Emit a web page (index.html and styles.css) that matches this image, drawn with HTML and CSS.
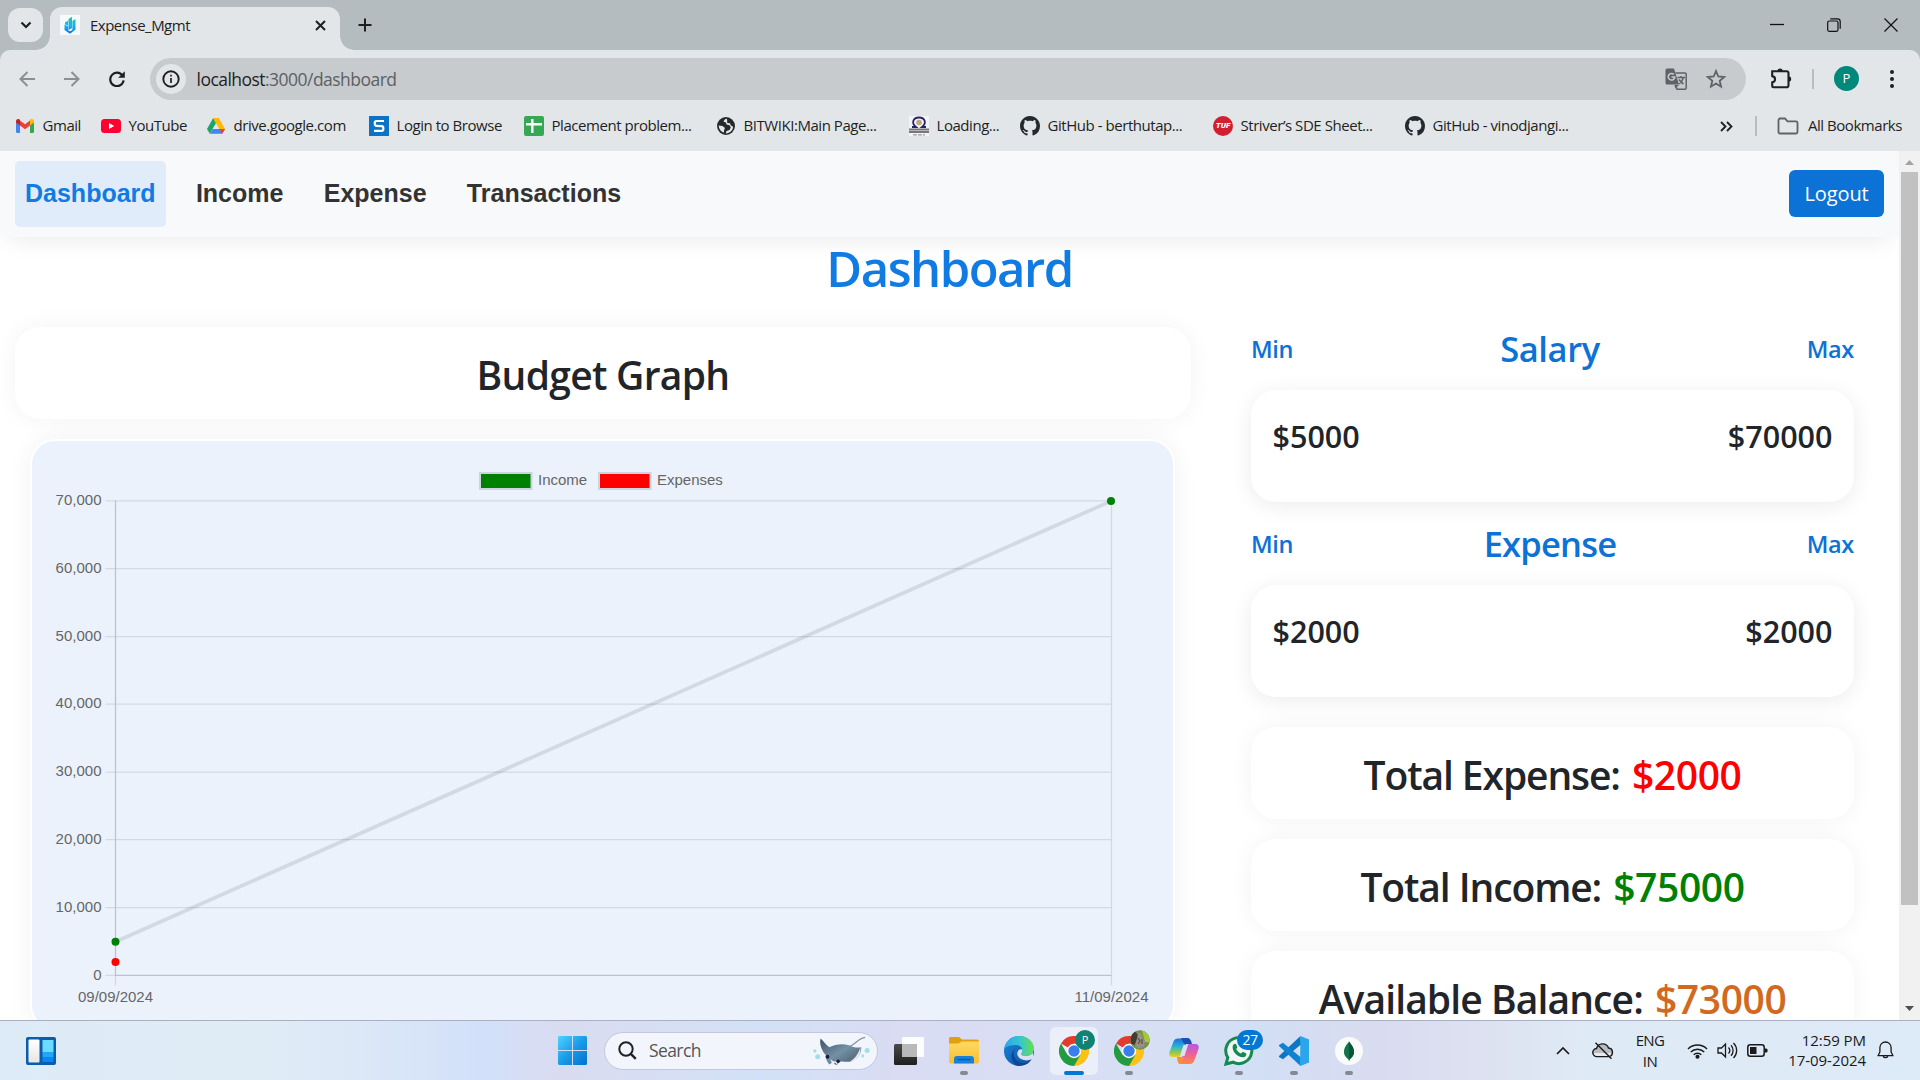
FILE: index.html
```html
<!DOCTYPE html>
<html lang="en">
<head>
<meta charset="utf-8">
<title>Expense_Mgmt</title>
<link rel="stylesheet" href="styles.css">
</head>
<body>
<svg width="0" height="0" class="defs">
  <defs>
    <linearGradient id="gStart" x1="0" y1="0" x2="1" y2="1"><stop offset="0" stop-color="#4fd3ff"/><stop offset=".5" stop-color="#1a9be8"/><stop offset="1" stop-color="#0072d0"/></linearGradient>
    <linearGradient id="gFav" x1="0" y1="0" x2="0" y2="1"><stop offset="0" stop-color="#12c8a8"/><stop offset=".5" stop-color="#1fb4ea"/><stop offset="1" stop-color="#0f6fe0"/></linearGradient>
    <linearGradient id="gWhite" x1="0" y1="0" x2="0" y2="1"><stop offset="0" stop-color="#fff"/><stop offset="1" stop-color="#e6e6e6"/></linearGradient>
    <linearGradient id="gFolder" x1="0" y1="0" x2="0" y2="1"><stop offset="0" stop-color="#ffda62"/><stop offset="1" stop-color="#f9bd2f"/></linearGradient>
    <linearGradient id="gEdgeTop" x1="0" y1="0" x2="1" y2="0"><stop offset="0" stop-color="#2aa8e6"/><stop offset=".5" stop-color="#34c4d4"/><stop offset="1" stop-color="#66e04f"/></linearGradient>
    <linearGradient id="gEdge" x1="0" y1="0" x2="1" y2="1"><stop offset="0" stop-color="#1b86d8"/><stop offset="1" stop-color="#0c4ea3"/></linearGradient>
    <linearGradient id="gCopA" x1="0" y1="0" x2="0" y2="1"><stop offset="0" stop-color="#1f6fe0"/><stop offset=".45" stop-color="#2bb5d6"/><stop offset=".75" stop-color="#8ccb4a"/><stop offset="1" stop-color="#f5c928"/></linearGradient>
    <linearGradient id="gCopB" x1="0" y1="0" x2="0" y2="1"><stop offset="0" stop-color="#b05be8"/><stop offset=".5" stop-color="#ee5f9a"/><stop offset="1" stop-color="#fb8b45"/></linearGradient>
    <linearGradient id="gRay" x1="0" y1="0" x2="1" y2="1"><stop offset="0" stop-color="#3f5264"/><stop offset=".5" stop-color="#7391a6"/><stop offset="1" stop-color="#46525f"/></linearGradient>
    <linearGradient id="gTaskDark" x1="0" y1="0" x2="0" y2="1"><stop offset="0" stop-color="#4a4a4a"/><stop offset="1" stop-color="#1f1f1f"/></linearGradient>
    <symbol id="github" viewBox="0 0 16 16"><path fill="#24292f" d="M8 0C3.58 0 0 3.58 0 8c0 3.54 2.29 6.53 5.47 7.59.4.07.55-.17.55-.38 0-.19-.01-.82-.01-1.49-2.01.37-2.53-.49-2.69-.94-.09-.23-.48-.94-.82-1.13-.28-.15-.68-.52-.01-.53.63-.01 1.08.58 1.23.82.72 1.21 1.87.87 2.33.66.07-.52.28-.87.51-1.07-1.78-.2-3.64-.89-3.64-3.95 0-.87.31-1.59.82-2.15-.08-.2-.36-1.02.08-2.12 0 0 .67-.21 2.2.82.64-.18 1.32-.27 2-.27s1.36.09 2 .27c1.53-1.04 2.2-.82 2.2-.82.44 1.1.16 1.92.08 2.12.51.56.82 1.27.82 2.15 0 3.07-1.87 3.75-3.65 3.95.29.25.54.73.54 1.48 0 1.07-.01 1.93-.01 2.2 0 .21.15.46.55.38A8.01 8.01 0 0 0 16 8c0-4.42-3.58-8-8-8z"/></symbol>
    <symbol id="chrome" viewBox="0 0 30 30">
      <path fill="#e33b2e" d="M15 15 2 7.5A15 15 0 0 1 28 7.500z"/>
      <path fill="#fbc116" d="M15 15V7.5h13A15 15 0 0 1 15 30z"/>
      <path fill="#249a41" d="M2 7.500 8.500 18.750 15 15 21.500 18.750 15 30A15 15 0 0 1 2 7.500z"/>
      <circle cx="15" cy="15" r="7.200" fill="#fff"/><circle cx="15" cy="15" r="5.700" fill="#3b7ded"/>
    </symbol>
  </defs>
</svg>

<div class="screen">
  <header class="tabstrip">
    <button class="tab-search"><svg width="12" height="8" viewBox="0 0 12 8"><path d="M1.500 1.500 6 6l4.500-4.500" fill="none" stroke="#1f1f1f" stroke-width="2.200"/></svg></button>
    <div class="tab">
      <svg class="favicon" width="20" height="20" viewBox="0 0 20 20"><rect width="20" height="20" fill="#f7fafc"/><path fill="url(#gFav)" d="M8.500 4 12 1.800V13l-3.500 2zM12.400 6 15.500 4v10.500L10 18.800 4.500 15V9.500l3.600 2v3.700l1.900 1 2.400-1.300zM5 7.500 8 5.800v5L5 9.300z"/></svg>
      <span class="tab-title">Expense_Mgmt</span>
      <svg class="tab-close" width="11" height="11" viewBox="0 0 11 11"><path d="m1 1 9 9M10 1l-9 9" stroke="#1f1f1f" stroke-width="2"/></svg>
    </div>
    <svg class="tab-new" width="14" height="14" viewBox="0 0 14 14"><path d="M7 .5v13M.5 7h13" stroke="#1f1f1f" stroke-width="2"/></svg>
    <div class="window-controls">
      <svg width="14" height="14" viewBox="0 0 14 14"><path d="M0 6.500h14" stroke="#111" stroke-width="1.300"/></svg>
      <svg width="14" height="14" viewBox="0 0 14 14" fill="none" stroke="#111" stroke-width="1.200"><rect x=".7" y="3" width="10.300" height="10.300" rx="1.500"/><path d="M3.300.8h7.200a2.700 2.700 0 0 1 2.700 2.700v7.200"/></svg>
      <svg width="14" height="14" viewBox="0 0 14 14"><path d="m.5.5 13 13m0-13-13 13" stroke="#111" stroke-width="1.200"/></svg>
    </div>
  </header>

  <div class="toolbar">
    <svg class="nav-icon" width="16" height="16" viewBox="0 0 16 16" fill="none" stroke="#8b8f92" stroke-width="2"><path d="M16 8H2M8.500 1 1.500 8l7 7"/></svg>
    <svg class="nav-icon" width="16" height="16" viewBox="0 0 16 16" fill="none" stroke="#8b8f92" stroke-width="2"><path d="M0 8h14M7.500 1l7 7-7 7"/></svg>
    <svg class="nav-icon" width="16" height="16" viewBox="0 0 16 16"><path d="M13.500 4.600A6.700 6.700 0 1 0 14.600 9.400" fill="none" stroke="#1f1f1f" stroke-width="2.200"/><path d="M15.800.2v6.600H9.200z" fill="#1f1f1f"/></svg>
    <div class="omnibox">
      <span class="site-info"><svg width="18" height="18" viewBox="0 0 18 18"><circle cx="9" cy="9" r="7.700" fill="none" stroke="#1f1f1f" stroke-width="1.900"/><path d="M9 8v5M9 4.800v1.800" stroke="#1f1f1f" stroke-width="1.700"/></svg></span>
      <span class="url"><b>localhost</b>:3000/dashboard</span>
      <svg width="22" height="22" viewBox="0 0 22 22"><path fill="#5f6367" d="M2 .5h7l5 16H2A1.500 1.500 0 0 1 .5 15V2A1.500 1.500 0 0 1 2 .5z"/><path fill="none" stroke="#5f6367" stroke-width="1.500" d="M10.500 5H20a1.200 1.200 0 0 1 1.200 1.200V20A1.200 1.200 0 0 1 20 21.200h-8L10 17M12.500 9.500h7.500M16 8v1.500M18.500 9.500c-.8 3-2.500 5-4.500 6.500M14 11.500c1.300 2 2.500 3.300 4.500 4.500"/><path fill="none" stroke="#c7cbce" stroke-width="1.500" d="M8.900 6.500a3.300 3.300 0 1 0 .9 2.600H6.500"/><path fill="#5f6367" d="M10 17h4l-3.500 3.500z"/></svg>
      <svg class="star" width="20" height="20" viewBox="0 0 20 20"><path d="m10 2 2.300 5.500 6 .5-4.600 3.900 1.400 5.800L10 14.600l-5.100 3.100 1.400-5.800L1.700 8l6-.5z" fill="none" stroke="#5f6367" stroke-width="1.800"/></svg>
    </div>
    <svg class="ext" width="23" height="22" viewBox="0 0 23 22"><path d="M3 4.200h4.500M2.200 4.200h14.500a1.800 1.800 0 0 1 1.800 1.800V18.500a1.800 1.800 0 0 1-1.800 1.800H3.500a1.300 1.300 0 0 1-1.300-1.300V15.300c3.800-.6 3.800-5.600 0-6.200z" fill="none" stroke="#1f1f1f" stroke-width="2.100"/><path d="M7.500 4a2.600 2.600 0 0 1 5.200 0zM18.500 9.300a2.600 2.600 0 0 1 0 5.400z" fill="#1f1f1f"/></svg>
    <i class="divider"></i>
    <span class="avatar">P</span>
    <svg class="kebab" width="6" height="20" viewBox="0 0 6 20" fill="#1f1f1f"><circle cx="3" cy="3" r="2"/><circle cx="3" cy="10" r="2"/><circle cx="3" cy="17" r="2"/></svg>
  </div>

  <div class="bookmarks">
    <div class="bookmark-list">
      <span class="bm"><svg width="20" height="20" viewBox="0 0 20 20"><path fill="#4285f4" d="M1 5v10.500A1.500 1.500 0 0 0 2.500 17H5V8z"/><path fill="#34a853" d="M19 5v10.500a1.500 1.500 0 0 1-1.500 1.500H15V8z"/><path fill="#ea4335" d="M5 4.500 10 8.300l5-3.800v5L10 13.300 5 9.500z"/><path fill="#c5221f" d="M1 5.200c0-2 2.200-2.800 3.500-1.800L5 3.800v5.700L1 6.500z"/><path fill="#fbbc04" d="M19 5.200c0-2-2.200-2.800-3.500-1.800l-.5.400v5.700l4-3z"/></svg><span>Gmail</span></span>
      <span class="bm"><svg width="20" height="20" viewBox="0 0 20 20"><rect y="3" width="20" height="14" rx="3.500" fill="#ff0033"/><path fill="#fff" d="m8 7 5.200 3L8 13z"/></svg><span>YouTube</span></span>
      <span class="bm"><svg width="20" height="20" viewBox="0 0 20 20"><path fill="#1fa463" d="M7.200 2 10 7 3.800 17.800 1 13z"/><path fill="#ffba00" d="M7.200 2h5.600L19 13h-5.600z"/><path fill="#4285f4" d="M6.600 13H19l-2.800 4.800H3.800z"/><path fill="#ea4335" d="M13.400 13H19l-2.800 4.800z"/></svg><span>drive.google.com</span></span>
      <span class="bm"><svg width="20" height="20" viewBox="0 0 20 20"><rect width="20" height="20" fill="#0a73c8"/><path d="M15 5H7.500Q5.800 5 5.800 6.500V8q0 1.700 1.800 1.800l5 .4q1.700.1 1.700 1.700v1.300q0 1.600-1.700 1.600H5" fill="none" stroke="#fff" stroke-width="2.200"/></svg><span>Login to Browse</span></span>
      <span class="bm"><svg width="20" height="20" viewBox="0 0 20 20"><rect width="20" height="20" rx="2" fill="#34a853"/><path d="M8.300 3v14M2 8.200h16" stroke="#fff" stroke-width="2.400"/></svg><span>Placement problem...</span></span>
      <span class="bm"><svg width="20" height="20" viewBox="0 0 20 20"><circle cx="10" cy="10" r="9" fill="#26292c"/><path fill="#e2e6e9" d="M11 2.800c-2 .2-3.500 1.500-3.300 3l2.300.7.500 2 3 .8 1.300 2.200-1.300 2.600-3 1-.7 2.300c3.500.3 7-2.600 7.300-6.600l-2.500-1.500-.5-2-2.800-.3zM2.700 9.500l3.800.5 2.500 2-1 2.200v2.300C5 15.800 2.800 13 2.700 9.500z"/></svg><span>BITWIKI:Main Page...</span></span>
      <span class="bm"><svg width="20" height="20" viewBox="0 0 20 20"><rect width="20" height="20" fill="#f4f4f6"/><path d="M3 11h4c-5-4-3-9.500 3-9.500S18 7 13 11h4" fill="none" stroke="#26236f" stroke-width="1.800"/><circle cx="10" cy="6.500" r="2.800" fill="#bfa878"/><path d="M0 13.500h20M0 16h20" stroke="#77777c" stroke-width="1.800"/><path d="M4 18.800h12" stroke="#999" stroke-width="1.200" stroke-dasharray="4 1"/></svg><span>Loading...</span></span>
      <span class="bm"><svg width="20" height="20"><use href="#github"/></svg><span>GitHub - berthutap...</span></span>
      <span class="bm"><span class="tuf">TUF</span><span>Striver’s SDE Sheet...</span></span>
      <span class="bm"><svg width="20" height="20"><use href="#github"/></svg><span>GitHub - vinodjangi...</span></span>
    </div>
    <svg class="more" width="13" height="11" viewBox="0 0 13 11"><path d="m1 1 4.500 4.500L1 10M7 1l4.500 4.500L7 10" fill="none" stroke="#1f1f1f" stroke-width="1.800"/></svg>
    <i class="divider"></i>
    <span class="bm all"><svg width="22" height="18" viewBox="0 0 22 18"><path d="M2.500 1.500H8l2.500 2.800h8.500A1.500 1.500 0 0 1 20.500 5.800V15a1.500 1.500 0 0 1-1.500 1.500H3A1.500 1.500 0 0 1 1.500 15V3z" fill="none" stroke="#5f6367" stroke-width="1.800"/></svg><span>All Bookmarks</span></span>
  </div>

  <div class="viewport">
    <main class="page">
      <nav class="navbar">
        <a class="nav-link active">Dashboard</a>
        <a class="nav-link">Income</a>
        <a class="nav-link">Expense</a>
        <a class="nav-link">Transactions</a>
        <button class="logout">Logout</button>
      </nav>
      <h1 class="title">Dashboard</h1>
      <div class="columns">
        <section class="left">
          <div class="card budget">Budget Graph</div>
          <div class="chart">
            <svg width="1143" height="587" viewBox="32 441 1143 587" font-family="'Liberation Sans', Arial, sans-serif" font-size="15" fill="#666">
              <g stroke="#d3d9e3" stroke-width="1.250">
                <path d="M105.500 500.900h1006M105.500 568.700h1006M105.500 636.500h1006M105.500 704.200h1006M105.500 772h1006M105.500 839.700h1006M105.500 907.500h1006M105.500 975.400h10M115.500 975v10.500M1111.500 501v484.500"/>
              </g>
              <path d="M115.500 500.500V975.400H1111.500" fill="none" stroke="#bcc1cc" stroke-width="1.250"/>
              <g text-anchor="end">
                <text x="101.500" y="505">70,000</text><text x="101.500" y="573">60,000</text><text x="101.500" y="641">50,000</text><text x="101.500" y="708">40,000</text><text x="101.500" y="776">30,000</text><text x="101.500" y="844">20,000</text><text x="101.500" y="912">10,000</text><text x="101.500" y="980">0</text>
              </g>
              <g text-anchor="middle"><text x="115.500" y="1002">09/09/2024</text><text x="1111.500" y="1002">11/09/2024</text></g>
              <g stroke="#ccd5df" stroke-width="2"><rect x="480" y="473" width="51.500" height="16" fill="#008000"/><rect x="599" y="473" width="51.500" height="16" fill="#f00"/></g>
              <text x="538" y="485">Income</text><text x="657" y="485">Expenses</text>
              <path d="M115.500 941.700 1111.500 500.900" stroke="#000" stroke-opacity=".1" stroke-width="3.750"/>
              <circle cx="115.500" cy="941.700" r="4" fill="#008000"/><circle cx="1111" cy="500.900" r="4" fill="#008000"/><circle cx="115.500" cy="962" r="4" fill="#f00"/>
            </svg>
          </div>
        </section>
        <section class="right">
          <div class="range-head"><span>Min</span><h2 class="salary">Salary</h2><span>Max</span></div>
          <div class="card range"><span>$5000</span><span>$70000</span></div>
          <div class="range-head"><span>Min</span><h2>Expense</h2><span>Max</span></div>
          <div class="card range"><span>$2000</span><span>$2000</span></div>
          <div class="card total first"><span class="lbl tight">Total Expense:</span><span class="amt red">$2000</span></div>
          <div class="card total"><span class="lbl tight">Total Income:</span><span class="amt green">$75000</span></div>
          <div class="card total"><span class="lbl">Available Balance:</span><span class="amt orange">$73000</span></div>
        </section>
      </div>
    </main>
    <div class="scrollbar">
      <svg width="9" height="5" viewBox="0 0 9 5"><path d="M0 5h9L4.500 0z" fill="#a3a3a3"/></svg>
      <i class="thumb"></i>
      <svg width="9" height="5" viewBox="0 0 9 5"><path d="M0 0h9L4.500 5z" fill="#505050"/></svg>
    </div>
  </div>

  <footer class="taskbar">
    <svg class="widgets" width="30" height="28" viewBox="0 0 30 28"><rect width="30" height="28" rx="2" fill="#0b5cab"/><rect x="2.500" y="2.500" width="11" height="23" rx="1" fill="url(#gWhite)"/><path fill="#69dcff" d="M16.500 3h11v12.500h-11z"/><path fill="#1fa8fb" d="M16.500 15.500h11v5h-11z"/><path fill="#0a86ee" d="M16.500 20.500h11V25h-11z"/></svg>
    <div class="dock">
      <svg class="start" width="29" height="29" viewBox="0 0 29 29"><path fill="url(#gStart)" d="M1 0h13v14H0V1zM15 0h13l1 1v13H15zM0 15h14v14H1l-1-1zM15 15h14v13l-1 1H15z"/></svg>
      <div class="search">
        <svg width="19" height="19" viewBox="0 0 19 19"><circle cx="8" cy="8" r="6.700" fill="none" stroke="#222" stroke-width="2"/><path d="m12.800 12.800 5 5" stroke="#222" stroke-width="2.400"/></svg>
        <span>Search</span>
        <svg width="60" height="32" viewBox="0 0 62 32"><path d="M38 12C46 10 48 3 56 2" fill="none" stroke="#8696a8" stroke-width="1.300"/><path fill="url(#gRay)" d="M10 3c3 3 6 7 9 9 6-3 14-4 20-2 5 2 8 3 13 2 0 8-5 13-12 15-6 1-9-2-12 2-1 2-3 2-4 0l-2-1-3 2c-3-3-4-6-3-9-4-4-8-12-6-18z"/><path fill="#e3e8ef" d="M51 12c1 8-3 13-11 15 5-3 9-8 11-15z"/><path fill="#eef2f7" d="M20 24c3 4 6 3 8 1l-1 5-2-2-3 2z"/><circle cx="17" cy="22" r="2" fill="#14213c"/><circle cx="28" cy="26.500" r="1.800" fill="#14213c"/><g fill="#9fdfeb"><circle cx="7" cy="22" r="2.600"/><circle cx="4" cy="16" r="1.700"/><circle cx="58" cy="15.500" r="2.600"/><circle cx="53.500" cy="21" r="1.600"/></g></svg>
      </div>
      <div class="app"><svg width="30" height="28" viewBox="0 0 30 28"><rect y="7" width="23" height="21" rx="1.500" fill="url(#gTaskDark)"/><rect x="8" width="22" height="20" rx="1" fill="#fff" opacity=".92"/><path fill="#b9b9b9" d="M8 7h15v13H8z"/></svg></div>
      <div class="app"><svg width="30" height="27" viewBox="0 0 30 27"><path fill="#e2a10c" d="M1 0h9l3 2.500h15a2 2 0 0 1 2 2V9H0V1z"/><path fill="url(#gFolder)" d="M0 6.500h9.500l3-2H30V25l-1.500 1.500h-27L0 25z"/><path fill="#1683d8" d="M5 26.500V22a3 3 0 0 1 3-3h14a3 3 0 0 1 3 3v4.500z"/><path d="M8.500 22.500h13" stroke="#0b5ca8" stroke-width="1.500"/></svg><i class="dot"></i></div>
      <div class="app"><svg width="30" height="30" viewBox="0 0 30 30"><circle cx="15" cy="15" r="15" fill="url(#gEdge)"/><path fill="url(#gEdgeTop)" d="M.3 12.500C2 4.500 8 0 15 0c9 0 15 6 15 12.500 0 4.500-3.500 7.500-8 7.500-3 0-4.800-1-4.800-2s1.300-1.500 1.300-3.500c0-3-3-5.500-7-5.500-5 0-9 1.500-11.200 3.500z"/><path fill="#dbe1f5" d="M18.500 14.500c0 2-1.300 2.500-1.300 3.500s1.800 2 4.800 2c3 0 5.600-1.300 7-3.500v8l-1.500-1.200c-3 1.500-7 1.500-10 0-4-2-5.500-6-3-9 1-1.200 3.800-1.800 4 .2z"/><path fill="#0d3f8c" d="M11.500 12.500c-4 5-1 12 5 14 4 1.400 8 .2 11-3.200C25 28 20.500 30 15 30 9.500 29 7 24 7.500 19.500c.2-3 2-5.500 4-7z" opacity=".75"/></svg></div>
      <div class="app active"><svg width="30" height="30"><use href="#chrome"/></svg><span class="badge p">P</span><i class="dot wide"></i></div>
      <div class="app"><svg width="30" height="30"><use href="#chrome"/></svg><svg class="badge" width="20" height="20" viewBox="0 0 20 20"><circle cx="10" cy="10" r="10" fill="#78924a"/><path fill="#a6c832" d="M12 .2a10 10 0 0 1 7.500 12L15 12z"/><path fill="#3e3f31" d="M5 1.500 9 6l-4 9-3.500-1A10 10 0 0 1 5 1.500z"/><path fill="#9a9086" d="M8 3l3-.5 1 5 3 3-1 6-6 2-3-4 2-6z"/><path d="m8 8 2 3-2 3m4-5v5" stroke="#57524b" stroke-width="1.300" fill="none"/></svg><i class="dot"></i></div>
      <div class="app"><svg width="30" height="28" viewBox="0 0 30 28"><path fill="url(#gCopA)" d="M9 1.500h10.500L13 17c-.7 2-2 3-4 3H3.500c-2.500 0-4-2-3-5L4.500 4.500c.8-2 2.300-3 4.500-3z"/><path fill="#184fb4" d="M12 1h7c2 0 3 2.500 4 6h-5c-2 0-3 0-4-2z"/><path fill="url(#gCopB)" d="M21 27H10.500L17 10c.7-2 2-3 4-3h5.500c2.500 0 4 2 3 5l-4 11c-.8 2.500-2.300 4-4.500 4z"/><path fill="#fa8e3e" d="M8 20h7l-1.500 5c-.7 1.800-1.500 2-3 2-1.500 0-2.300-4-2.500-7z"/><path fill="#dbe1f5" d="m14.500 8-3.500 11h4.500L19 8z"/></svg></div>
      <div class="app"><svg width="30" height="30" viewBox="0 0 30 30"><path d="M2 28 3.800 21.500A13 13 0 1 1 9 26.200z" fill="#f2f6f5" stroke="#148a50" stroke-width="3"/><path fill="#148a50" d="M9.500 8.500c1-1.200 2.300-1 2.800 0l1 2.500c.2.600-1.200 1.800-1 2.200 1 2 2.500 3.300 4.700 4.200.6.200 1.600-1.800 2.200-1.500l2.800 1.300c.8.500.3 3-1.500 3.700-2.500 1-6.500-.5-9-3.200-2.500-2.700-3.900-6.700-2-9.200z"/></svg><span class="badge num">27</span><i class="dot"></i></div>
      <div class="app"><svg width="30" height="30" viewBox="0 0 30 30"><path fill="#0a76c4" d="M21.500 0 22 8.500 4 23.200 0 21v-1L21.500 0z"/><path fill="#0f82d2" d="M21.500 30 22 21.500 4 6.800 0 9v1L21.500 30z"/><path fill="#2ba6ec" d="M21.500 0 30 3.500v23L21.500 30l-.5-1z"/></svg><i class="dot"></i></div>
      <div class="app"><svg width="28" height="28" viewBox="0 0 28 28"><circle cx="14" cy="14" r="14" fill="#f9fbfb"/><path fill="#10734a" d="M14 4.500c1 2 5 5 5 10.500 0 4-3 6-4.500 7.500l-.5 2-.5-2C12 21 9 19 9 15c0-5.500 4-8.500 5-10.500z"/><path fill="#0a5538" d="M14 4.500c1 2 5 5 5 10.500 0 4-3 6-4.500 7.500l-.5 2z"/></svg><i class="dot"></i></div>
    </div>
    <div class="tray">
      <svg width="14" height="8" viewBox="0 0 14 8"><path d="m1 7 6-6 6 6" fill="none" stroke="#1a1a1a" stroke-width="1.700"/></svg>
      <svg class="cloud" width="22" height="17" viewBox="0 0 22 17"><path d="M5 14.500a4 4 0 0 1-.5-8A6.300 6.300 0 0 1 16.500 6a4.300 4.300 0 0 1 .5 8.500z" fill="#b9bcc0" stroke="#1a1a1a" stroke-width="1.400"/><path d="M2 11h17c0 2-1 3-3 3H5c-2 0-3-1-3-3z" fill="#e7e9eb"/><path d="m3.500.7 16 16" stroke="#1a1a1a" stroke-width="1.500"/></svg>
      <span class="lang">ENG<br>IN</span>
      <svg class="wifi" width="21" height="16" viewBox="0 0 21 16" fill="none" stroke="#1a1a1a" stroke-width="1.500"><path d="M1 6a13.500 13.500 0 0 1 19 0M3.800 9a9.500 9.500 0 0 1 13.400 0M6.700 11.800a5.400 5.400 0 0 1 7.600 0"/><circle cx="10.500" cy="13.800" r="1.300" fill="#1a1a1a"/></svg>
      <svg class="vol" width="21" height="17" viewBox="0 0 21 17" fill="none" stroke="#1a1a1a" stroke-width="1.300"><path d="M1 6h3.500L8.500 2v13l-4-4H1zM11.500 5.500a4.500 4.500 0 0 1 0 6M14 3.300a7.500 7.500 0 0 1 0 10.400M16.500 1a10.500 10.500 0 0 1 0 15"/></svg>
      <svg class="batt" width="21" height="13" viewBox="0 0 21 13"><rect x=".8" y=".8" width="16.400" height="11.400" rx="2.500" fill="none" stroke="#1a1a1a" stroke-width="1.500"/><rect x="3" y="3" width="6.500" height="7" fill="#1a1a1a"/><path d="M18 4.500h1a1.500 1.500 0 0 1 1.500 2 1.500 1.500 0 0 1-1.500 2h-1z" fill="#1a1a1a"/></svg>
      <span class="clock">12:59 PM<br>17-09-2024</span>
      <svg class="bell" width="17" height="19" viewBox="0 0 17 19"><path d="M8.500 1a5.600 5.600 0 0 0-5.600 5.600V11L1 14.700h15L14.100 11V6.600A5.600 5.600 0 0 0 8.500 1zM6.200 15a2.400 2.400 0 0 0 4.600 0" fill="none" stroke="#1a1a1a" stroke-width="1.300" stroke-linejoin="round"/></svg>
    </div>
  </footer>
</div>
</body>
</html>
```
FILE: styles.css
```css
* { box-sizing: border-box; }
body { margin: 0; background: #fff; font-family: "Open Sans", "Noto Sans", sans-serif; }
h1, h2 { margin: 0; }
button { border: 0; padding: 0; font-family: inherit; }
svg { display: block; flex: none; }
.defs { position: absolute; }
.screen { width: 1920px; height: 1080px; overflow: hidden; display: flex; flex-direction: column; background: #b4bcbf; }

/* tab strip */
.tabstrip { height: 50px; flex: none; display: flex; align-items: flex-start; background: #b4bcbf; padding-left: 8px; }
.tab-search { width: 35px; height: 34px; margin-top: 8px; border-radius: 12px; background: #e2e6e9; display: flex; align-items: center; justify-content: center; }
.tab { position: relative; width: 290px; height: 43px; margin: 7px 0 0 7px; padding: 0 14px 0 10px; border-radius: 12px 12px 0 0; background: #e2e6e9; display: flex; align-items: center; }
.tab::before, .tab::after { content: ""; position: absolute; bottom: 0; width: 14px; height: 14px; }
.tab::before { left: -14px; background: radial-gradient(circle at 0 0, transparent 13.5px, #e2e6e9 14px); }
.tab::after { right: -14px; background: radial-gradient(circle at 100% 0, transparent 13.5px, #e2e6e9 14px); }
.favicon { margin-top: -7px; }
.tab-title { flex: 1; margin: -8px 0 0 10px; font-size: 15px; letter-spacing: -.5px; color: #1f1f1f; }
.tab-close { margin-top: -7px; }
.tab-new { margin: 18px 0 0 18px; }
.window-controls { margin-left: auto; padding: 18px 22px 0 0; display: flex; gap: 43px; }

/* toolbar */
.toolbar { height: 58px; flex: none; display: flex; align-items: center; background: #e2e6e9; border-radius: 10px 10px 0 0; padding: 0 25px 0 19px; }
.nav-icon { margin-right: 29px; }
.nav-icon:nth-child(3) { margin-right: 25px; }
.omnibox { width: 1597px; height: 42px; padding: 0 20px 0 6px; border-radius: 21px; background: #c7cbce; display: flex; align-items: center; }
.site-info { width: 30px; height: 30px; border-radius: 50%; background: #e2e6e9; display: flex; align-items: center; justify-content: center; }
.url { flex: 1; margin-left: 10.5px; font-size: 17.5px; letter-spacing: -.53px; color: #5c6063; }
.url b { font-weight: 400; color: #1f1f1f; }
.star { margin-left: 19px; }
.ext { margin: -2px 0 0 24px; }
.toolbar .divider { margin-left: 19px; }
.divider { width: 2px; height: 20px; background: #b9bdc0; }
.avatar { width: 25px; height: 25px; margin: -1px 0 0 20px; border-radius: 50%; background: #00897b; color: #fff; font-size: 13px; line-height: 25px; text-align: center; }
.kebab { margin-left: 30px; }

/* bookmarks */
.bookmarks { height: 43px; flex: none; display: flex; align-items: center; background: #e2e6e9; padding: 0 18px 7px 15px; }
.bookmark-list { width: 1706px; display: grid; grid-template-columns: 86px 105px 163px 155px 192px 193px 111px 193px 192px auto; }
.bm { display: flex; align-items: center; gap: 7.500px; font-size: 15px; line-height: 20px; letter-spacing: -.45px; color: #1f1f1f; white-space: nowrap; }
.bm > span:last-child { margin-top: -1.500px; }
.tuf { width: 20px; height: 20px; border-radius: 50%; background: #d21f2f; color: #fff; font: italic 900 8px/20px "Roboto", sans-serif; text-align: center; letter-spacing: 0; }
.bookmarks .divider { margin: 0 20px 0 22px; }
.all { gap: 9px; }

/* page */
.viewport { flex: 1; min-height: 0; display: flex; overflow: hidden; background: #fff; }
.page { width: 1899px; color: #212529; overflow: hidden; }
.navbar { height: 86px; display: flex; align-items: center; gap: 20.300px; padding: 0 15px; background: #f8f9fb; box-shadow: 0 10px 24px -8px rgba(0,0,0,.09); }
.nav-link { height: 66px; padding: 0 10px; border-radius: 5px; font: bold 25px/65px "Liberation Sans", Arial, sans-serif; color: #333; }
.nav-link.active { background: #e0ecf9; color: #117be4; }
.logout { width: 95px; height: 47px; margin: -1px 0 0 auto; border-radius: 6px; background: #0d72d6; color: #fff; font-size: 20px; letter-spacing: -.1px; }
.title { margin-top: 1px; height: 60px; line-height: 60px; text-align: center; font-size: 49px; font-weight: 600; letter-spacing: -1.500px; color: #117be4; }
.columns { display: flex; align-items: flex-start; justify-content: space-between; padding: 29px 45px 0 15px; }
.card { background: #fff; border-radius: 25px; box-shadow: 0 0 25px rgba(0,0,0,.05); }
.left { width: 1176px; }
.budget { height: 92px; line-height: 95px; text-align: center; font-size: 39px; font-weight: 600; letter-spacing: -.7px; }
.chart { width: 1145px; margin: 20px 0 0 15px; border: 2px solid #fff; border-radius: 25px; background: #ebf2fc; box-shadow: 0 0 25px rgba(0,0,0,.06); overflow: hidden; }
.right { width: 603px; }
.range-head { height: 42px; margin-top: 21px; display: flex; align-items: center; justify-content: space-between; color: #0d72d6; font-size: 23.500px; font-weight: 600; letter-spacing: -.3px; }
.range-head span { margin-top: -1px; }
.range-head:first-child { margin-top: 1px; }
.range-head h2 { font-size: 34.5px; font-weight: 600; letter-spacing: -.8px; line-height: 44px; }
.range-head .salary { letter-spacing: -.4px; }
.card.range { height: 112px; margin-top: 20px; padding: 25px 21.500px; display: flex; justify-content: space-between; font-size: 30.500px; line-height: 43px; font-weight: 600; box-shadow: 0 4px 22px rgba(0,0,0,.08); }
.total { height: 92px; margin-top: 20px; display: flex; align-items: center; justify-content: center; gap: 12px; font-weight: 600; font-size: 39px; line-height: 60px; padding-top: 3px; }
.total.first { margin-top: 30px; }
.lbl { letter-spacing: -.9px; }
.lbl.tight { letter-spacing: -1.100px; }
.amt { letter-spacing: -.4px; }
.red { color: #f00; }
.green { color: #008000; }
.orange { color: #d2691e; }

.scrollbar { width: 21px; display: flex; flex-direction: column; align-items: center; background: #f1f1f1; padding-top: 9px; }
.thumb { width: 17px; height: 733px; margin: 7px 0 101px; background: #c1c1c1; }

/* taskbar */
.taskbar { height: 60px; flex: none; display: flex; align-items: center; border-top: 1px solid #a9b0c2; background: linear-gradient(90deg, #ddebf8 0, #e0ecf5 240px, #dce8f7 360px, #d2e0fa 480px, #d9dcf1 560px, #d6dff4 680px, #d2e1f7 760px, #d9dcf3 900px, #d8dff4 1100px, #d2dff5 1250px, #d9dcf0 1380px, #dde1f0 1480px, #deeaf5 1580px, #ddeaf7 1920px); }
.widgets { margin-left: 26px; }
.dock { display: flex; align-items: center; margin-left: 502px; }
.search { width: 274px; height: 38px; margin: 0 7px 0 17px; padding: 0 6px 0 13px; border-radius: 19px; border: 1px solid #c2c8dd; background: #f2f5fc; display: flex; align-items: center; font-size: 17.5px; letter-spacing: -.6px; color: #555; }
.search span { flex: 1; margin: -1px 0 0 12px; }
.app { position: relative; width: 48px; height: 48px; margin-right: 7px; border-radius: 6px; display: flex; align-items: center; justify-content: center; }
.app.active { background: #ebeff9; }
.dot { position: absolute; left: 20px; bottom: 0; width: 8px; height: 4px; border-radius: 2px; background: #858994; }
.dot.wide { left: 14px; width: 20px; background: #0078d4; }
.badge { position: absolute; left: 25px; top: 3px; width: 20px; height: 20px; border-radius: 50%; }
.badge.p { background: #0f8273; color: #fff; font-size: 11px; line-height: 20px; text-align: center; }
.badge.num { left: 22px; width: 26px; border-radius: 10px; background: #0078d4; color: #fff; font-size: 14px; line-height: 20px; text-align: center; letter-spacing: -.4px; }
.tray { flex: 1; display: flex; align-items: center; justify-content: flex-end; padding-right: 26px; color: #1a1a1a; font-size: 15px; line-height: 20.500px; letter-spacing: -.05px; }
.cloud { margin-left: 22px; }
.lang { width: 32px; margin-left: 20px; text-align: center; letter-spacing: -.6px; }
.wifi { margin-left: 21px; }
.vol { margin-left: 9px; }
.batt { margin-left: 9px; }
.clock { width: 80px; margin: -1px 0 0 18px; text-align: right; white-space: nowrap; }
.bell { margin-left: 11px; }
```
